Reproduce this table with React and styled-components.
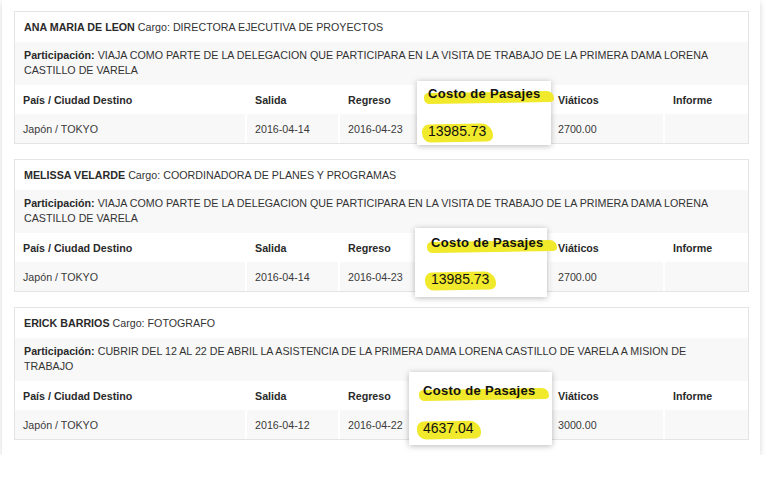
import React from 'react';
import styled, {createGlobalStyle} from 'styled-components';

const Global=createGlobalStyle`
body{
    margin: 0;
    background: #ffffff;
    font-family: "Liberation Sans", Arial, sans-serif;
    color: #333;
}
`;

const Panel=styled.div`
margin-left: 2px;
width: 758px;
box-sizing: border-box;
padding: 11px 11px 15px 12px;
background: #fff;
box-shadow: 0px 2px 6px rgba(0,0,0,0.16);
display: flex;
flex-direction: column;
gap: 15px;
`;

const Card=styled.div`
position: relative;
border: 1px solid #e4e4e4;
font-size: 10.7px;
`;

const NameRow=styled.div`
height: 30px;
display: flex;
align-items: center;
padding: 0px 9px;
`;

const Bold=styled.b`
font-weight: bold;
color: #2a2a2a;
`;

const PartRow=styled.div`
background: #f8f8f8;
padding: 6px 24px 7px 9px;
line-height: 15px;
`;

const Grid=styled.div`
display: grid;
grid-template-columns: 230px 91px 91px 115px 113px 1fr;
column-gap: 2px;
height: 29px;
`;

const Cell=styled.div`
display: flex;
align-items: center;
padding: 0px 8px;
background: ${p=>p.$shade?'#f8f8f8':'transparent'};
font-weight: ${p=>p.$head?'bold':'normal'};
color: ${p=>p.$head?'#2a2a2a':'#3a3a3a'};
`;

const Zoom=styled.div`
position: absolute;
background: #fff;
box-shadow: 0px 1px 6px rgba(0,0,0,0.28);
box-sizing: border-box;
display: flex;
flex-direction: column;
justify-content: space-between;
color: #111;
`;

const Mark=styled.span`
position: relative;
display: inline-block;
z-index: 0;
&::before{
    content: '';
    position: absolute;
    z-index: -1;
    background: #f1e92c;
    left: ${p=>p.$l}px;
    right: ${p=>p.$r}px;
    top: ${p=>p.$t}px;
    bottom: ${p=>p.$b}px;
    border-radius: 7px 12px 6px 9px;
    transform: rotate(${p=>p.$rot||0}deg);
}
`;

const Title=styled(Mark)`
font-size: 13px;
font-weight: bold;
letter-spacing: 0.3px;
`;

const Amount=styled(Mark)`
font-size: 14px;
`;

const people=[
    {
        name: 'ANA MARIA DE LEON',
        cargo: 'DIRECTORA EJECUTIVA DE PROYECTOS',
        part: 'VIAJA COMO PARTE DE LA DELEGACION QUE PARTICIPARA EN LA VISITA DE TRABAJO DE LA PRIMERA DAMA LORENA CASTILLO DE VARELA',
        salida: '2016-04-14',
        regreso: '2016-04-23',
        costo: '13985.73',
        viaticos: '2700.00',
        zoom: {left: 402, top: 69, width: 134, height: 64, pad: '5px 0px 6px 11px'}
    },
    {
        name: 'MELISSA VELARDE',
        cargo: 'COORDINADORA DE PLANES Y PROGRAMAS',
        part: 'VIAJA COMO PARTE DE LA DELEGACION QUE PARTICIPARA EN LA VISITA DE TRABAJO DE LA PRIMERA DAMA LORENA CASTILLO DE VARELA',
        salida: '2016-04-14',
        regreso: '2016-04-23',
        costo: '13985.73',
        viaticos: '2700.00',
        zoom: {left: 400, top: 68, width: 132, height: 69, pad: '7px 0px 10px 16px'}
    },
    {
        name: 'ERICK BARRIOS',
        cargo: 'FOTOGRAFO',
        part: 'CUBRIR DEL 12 AL 22 DE ABRIL LA ASISTENCIA DE LA PRIMERA DAMA LORENA CASTILLO DE VARELA A MISION DE TRABAJO',
        salida: '2016-04-12',
        regreso: '2016-04-22',
        costo: '4637.04',
        viaticos: '3000.00',
        zoom: {left: 394, top: 64, width: 143, height: 73, pad: '11px 0px 9px 14px'}
    }
];

const Row=({p})=>{
    const z=p.zoom;
    return(
        <Card>
            <NameRow><Bold>{p.name}</Bold>&nbsp;Cargo: {p.cargo}</NameRow>
            <PartRow><Bold>Participación:</Bold> {p.part}</PartRow>
            <Grid>
                <Cell $head>País / Ciudad Destino</Cell>
                <Cell $head>Salida</Cell>
                <Cell $head>Regreso</Cell>
                <Cell $head></Cell>
                <Cell $head>Viáticos</Cell>
                <Cell $head>Informe</Cell>
            </Grid>
            <Grid>
                <Cell $shade>Japón / TOKYO</Cell>
                <Cell $shade>{p.salida}</Cell>
                <Cell $shade>{p.regreso}</Cell>
                <Cell $shade></Cell>
                <Cell $shade>{p.viaticos}</Cell>
                <Cell $shade></Cell>
            </Grid>
            {/* magnified "Costo de Pasajes" cell laid over the table */}
            <Zoom style={{left: z.left, top: z.top, width: z.width, height: z.height, padding: z.pad}}>
                <div><Title $l={-4} $r={-14} $t={6} $b={-2} $rot={-1}>Costo de Pasajes</Title></div>
                <div><Amount $l={-6} $r={-7} $t={1} $b={-3} $rot={-1}>{p.costo}</Amount></div>
            </Zoom>
        </Card>
    )
}

const App=()=>{
    return(
        <>
            <Global/>
            <Panel>
                {people.map(p=><Row key={p.name} p={p}/>)}
            </Panel>
        </>
    )
}

export default App;
